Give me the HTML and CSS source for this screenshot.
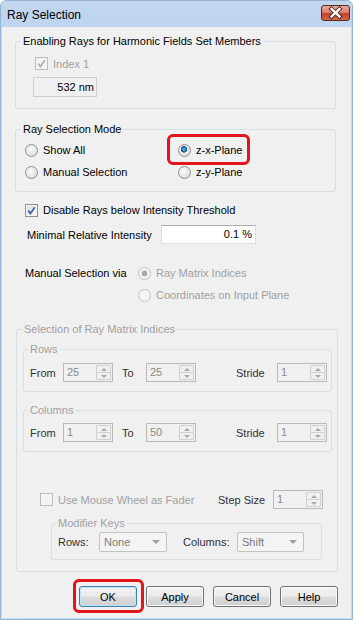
FILE: index.html
```html
<!DOCTYPE html>
<html lang="en">
<head>
    <meta charset="UTF-8">
    <meta name="viewport" content="width=device-width, initial-scale=1.0">
    <title>Ray Selection</title>
    <link rel="stylesheet" href="styles.css">
</head>
<body>
    <div class="window">
        <div class="titlebar">
            <span class="title">Ray Selection</span>
            <span class="close-btn">
                <svg width="29" height="16" viewBox="0 0 29 16">
                    <path d="M10.5 4 L18.5 11.5 M18.5 4 L10.5 11.5" stroke="#4a1812" stroke-width="4.2" stroke-linecap="square"/>
                    <path d="M10.5 4 L18.5 11.5 M18.5 4 L10.5 11.5" stroke="#ffffff" stroke-width="2.4" stroke-linecap="square"/>
                </svg>
            </span>
        </div>

        <div class="client">
            <!-- harmonic fields -->
            <fieldset class="group group-members">
                <legend>Enabling Rays for Harmonic Fields Set Members</legend>
                <div class="check-row index-row disabled">
                    <span class="checkbox checked"></span>
                    <span>Index 1</span>
                </div>
                <div class="textbox readonly wavelength">532 nm</div>
            </fieldset>

            <!-- mode -->
            <fieldset class="group group-mode">
                <legend>Ray Selection Mode</legend>
                <div class="radio-grid">
                    <div class="radio-item"><span class="radio"></span>Show All</div>
                    <div class="radio-item marked"><span class="radio checked"></span>z-x-Plane<span class="red-mark mark-plane"></span></div>
                    <div class="radio-item"><span class="radio"></span>Manual Selection</div>
                    <div class="radio-item"><span class="radio"></span>z-y-Plane</div>
                </div>
            </fieldset>

            <div class="check-row threshold-row">
                <span class="checkbox checked"></span>
                <span>Disable Rays below Intensity Threshold</span>
            </div>

            <div class="field-row intensity-row">
                <span class="intensity-label">Minimal Relative Intensity</span>
                <div class="textbox intensity">0.1 %</div>
            </div>

            <div class="via-block">
                <div class="via-row">
                    <span class="via-label">Manual Selection via</span>
                    <div class="radio-item disabled"><span class="radio checked"></span>Ray Matrix Indices</div>
                </div>
                <div class="via-row via-second">
                    <div class="radio-item disabled"><span class="radio"></span>Coordinates on Input Plane</div>
                </div>
            </div>

            <!-- matrix indices (disabled) -->
            <fieldset class="group group-matrix disabled">
                <legend>Selection of Ray Matrix Indices</legend>

                <fieldset class="group sub-group">
                    <legend>Rows</legend>
                    <div class="spin-row">
                        <span class="lbl lbl-from">From</span>
                        <div class="spin"><span class="spin-value">25</span><span class="spin-buttons"><span class="spin-up"></span><span class="spin-down"></span></span></div>
                        <span class="lbl lbl-to">To</span>
                        <div class="spin"><span class="spin-value">25</span><span class="spin-buttons"><span class="spin-up"></span><span class="spin-down"></span></span></div>
                        <span class="lbl lbl-stride">Stride</span>
                        <div class="spin"><span class="spin-value">1</span><span class="spin-buttons"><span class="spin-up"></span><span class="spin-down"></span></span></div>
                    </div>
                </fieldset>

                <fieldset class="group sub-group group-columns">
                    <legend>Columns</legend>
                    <div class="spin-row">
                        <span class="lbl lbl-from">From</span>
                        <div class="spin"><span class="spin-value">1</span><span class="spin-buttons"><span class="spin-up"></span><span class="spin-down"></span></span></div>
                        <span class="lbl lbl-to">To</span>
                        <div class="spin"><span class="spin-value">50</span><span class="spin-buttons"><span class="spin-up"></span><span class="spin-down"></span></span></div>
                        <span class="lbl lbl-stride">Stride</span>
                        <div class="spin"><span class="spin-value">1</span><span class="spin-buttons"><span class="spin-up"></span><span class="spin-down"></span></span></div>
                    </div>
                </fieldset>

                <div class="wheel-row">
                    <div class="check-row wheel-check">
                        <span class="checkbox"></span>
                        <span>Use Mouse Wheel as Fader</span>
                    </div>
                    <span class="lbl lbl-step">Step Size</span>
                    <div class="spin"><span class="spin-value">1</span><span class="spin-buttons"><span class="spin-up"></span><span class="spin-down"></span></span></div>
                </div>

                <fieldset class="group group-modifier">
                    <legend>Modifier Keys</legend>
                    <div class="combo-row">
                        <span class="lbl lbl-rows">Rows:</span>
                        <div class="combo combo-rows"><span>None</span><span class="combo-arrow"></span></div>
                        <span class="lbl lbl-columns">Columns:</span>
                        <div class="combo combo-columns"><span>Shift</span><span class="combo-arrow"></span></div>
                    </div>
                </fieldset>
            </fieldset>

            <div class="button-row">
                <span class="btn-wrap">
                    <button class="btn default">OK</button>
                    <span class="red-mark mark-ok"></span>
                </span>
                <button class="btn">Apply</button>
                <button class="btn">Cancel</button>
                <button class="btn">Help</button>
            </div>
        </div>
    </div>
</body>
</html>
```

FILE: styles.css
```css
body {
    margin: 0;
    background-color: #ffffff;
    font-family: "Liberation Sans", Arial, sans-serif;
    font-size: 11px;
    color: #000000;
}

.window {
    width: 353px;
    height: 620px;
    box-sizing: border-box;
    border: 1px solid #97b3d4;
    border-radius: 6px 6px 0 0;
    background-color: #c6daf0;
    display: flex;
    flex-direction: column;
}

.titlebar {
    height: 26px;
    flex-shrink: 0;
    display: flex;
    align-items: flex-start;
    justify-content: space-between;
    background: linear-gradient(#c2d7ee, #bed4ed);
    border-radius: 5px 5px 0 0;
}

.title {
    font-size: 12px;
    margin: 7px 0 0 6px;
    line-height: 14px;
}

.close-btn {
    width: 29px;
    height: 16px;
    margin: 4px 2px 0 0;
    box-sizing: border-box;
    border: 1px solid #5a2620;
    border-radius: 3px;
    background: linear-gradient(#e6a99f 0%, #d9826f 45%, #c2402c 55%, #cf6a52 100%);
    display: flex;
}

.close-btn svg {
    margin: -1px;
}

.client {
    flex: 1;
    margin: 0 1px 1px 1px;
    background-color: #f0f0f0;
    padding: 0 0 0 13px;
}

/* group boxes */
.group {
    margin: 0;
    padding: 0;
    border: 1px solid #d5dfe5;
    border-radius: 3px;
    min-width: 0;
}

.group legend {
    padding: 0 2px;
    margin-left: 5px;
    line-height: 13px;
}

.group-members {
    width: 321px;
    box-sizing: border-box;
    margin-top: 8px;
    padding-bottom: 11px;
}

.group-mode {
    width: 321px;
    box-sizing: border-box;
    margin-top: 14px;
    padding-bottom: 8px;
}

.disabled,
.disabled legend {
    color: #a0a0a0;
}

/* checkbox / radio */
.check-row {
    display: flex;
    align-items: center;
    gap: 5px;
}

.checkbox {
    width: 13px;
    height: 13px;
    box-sizing: border-box;
    border: 1px solid #8e8f8f;
    background: linear-gradient(135deg, #dcdcdc, #fbfbfb);
    box-shadow: inset 0 0 0 1px #f4f4f4;
    flex-shrink: 0;
}

.checkbox.checked {
    background-image: url("data:image/svg+xml,%3Csvg xmlns='http://www.w3.org/2000/svg' width='11' height='11'%3E%3Cpath d='M2.2 5.6 L4.4 8.4 L8.8 2.2' fill='none' stroke='%234660a8' stroke-width='1.8'/%3E%3C/svg%3E"), linear-gradient(135deg, #dcdcdc, #fbfbfb);
}

.disabled .checkbox {
    border-color: #bcbcbc;
    background: #f4f4f4;
}

.disabled .checkbox.checked {
    background-image: url("data:image/svg+xml,%3Csvg xmlns='http://www.w3.org/2000/svg' width='11' height='11'%3E%3Cpath d='M2.2 5.6 L4.4 8.4 L8.8 2.2' fill='none' stroke='%23b0b0b0' stroke-width='1.8'/%3E%3C/svg%3E");
}

.index-row {
    height: 15px;
    margin: 8px 0 0 19px;
}

.textbox {
    height: 20px;
    box-sizing: border-box;
    line-height: 18px;
    text-align: right;
    padding-right: 3px;
    border: 1px solid #dbdfe6;
    border-top-color: #abadb3;
    background-color: #ffffff;
}

.textbox.readonly {
    background-color: #f0f0f0;
    border-color: #cfcfcf;
    padding-right: 2px;
}

.wavelength {
    width: 64px;
    margin: 6px 0 0 17px;
}

.radio-grid {
    display: grid;
    grid-template-columns: 153px 1fr;
    grid-auto-rows: 22px;
    margin: 3px 0 0 9px;
}

.radio-item {
    display: flex;
    align-items: center;
    gap: 5px;
    position: relative;
}

.radio {
    width: 13px;
    height: 13px;
    box-sizing: border-box;
    border-radius: 50%;
    border: 1px solid #8e8f8f;
    background: radial-gradient(circle at 40% 40%, #fbfbfb, #d4d4d4);
    flex-shrink: 0;
}

.radio.checked {
    background: radial-gradient(circle at 45% 40%, #8fd4f6 0, #2380c4 1.6px, #0c4d86 3px, transparent 3.4px), radial-gradient(circle at 40% 40%, #fbfbfb, #d4d4d4);
}

.disabled .radio {
    border-color: #c2c2c2;
    background: #f4f4f4;
}

.disabled .radio.checked {
    background: radial-gradient(circle, #a8a8a8 0 2.6px, transparent 3.2px), #f4f4f4;
}

.red-mark {
    position: absolute;
    box-sizing: border-box;
    border: 3px solid #e2151c;
    border-radius: 6px;
}

.mark-plane {
    left: -11px;
    top: -5px;
    width: 83px;
    height: 31px;
}

.threshold-row {
    height: 16px;
    margin: 10px 0 0 10px;
}

.field-row {
    display: flex;
    align-items: center;
}

.intensity-row {
    height: 19px;
    margin: 7px 0 0 12px;
}

.intensity-label {
    width: 134px;
}

.intensity {
    width: 95px;
    height: 19px;
    line-height: 17px;
}

.via-block {
    margin: 18px 0 0 10px;
}

.via-row {
    display: flex;
    align-items: center;
    height: 22px;
}

.via-label {
    width: 113px;
}

.via-second {
    padding-left: 113px;
}

/* matrix indices */
.group-matrix {
    width: 322px;
    box-sizing: border-box;
    margin: 17px 0 0 1px;
    padding-bottom: 11px;
}

.sub-group {
    width: 309px;
    box-sizing: border-box;
    margin: 7px 0 0 6px;
    padding-bottom: 9px;
}

.sub-group legend {
    margin-left: 4px;
}

.group-columns {
    margin-top: 12px;
}

.lbl {
    color: #303030;
}

.spin-row {
    display: flex;
    align-items: center;
    height: 19px;
    margin: 7px 0 0 6px;
}

.group-columns .spin-row {
    margin-top: 6px;
}

.lbl-from {
    width: 33px;
}

.lbl-to {
    width: 24px;
    margin-left: 9px;
}

.lbl-stride {
    width: 41px;
    margin-left: 40px;
}

.spin {
    width: 50px;
    height: 19px;
    box-sizing: border-box;
    border: 1px solid #b9b9b9;
    background-color: #f0f0f0;
    display: flex;
    padding: 1px;
}

.spin-value {
    flex: 1;
    padding-left: 2px;
    line-height: 15px;
    color: #8a8a8a;
}

.spin-buttons {
    width: 15px;
    display: flex;
    flex-direction: column;
    gap: 0;
}

.spin-up,
.spin-down {
    flex: 1;
    border: 1px solid #d0d0d0;
    border-radius: 1px;
    display: flex;
    align-items: center;
    justify-content: center;
}

.spin-down {
    margin-top: -1px;
}

.spin-up::after {
    content: "";
    border-left: 3px solid transparent;
    border-right: 3px solid transparent;
    border-bottom: 3px solid #a8a8a8;
}

.spin-down::after {
    content: "";
    border-left: 3px solid transparent;
    border-right: 3px solid transparent;
    border-top: 3px solid #a8a8a8;
}

.wheel-row {
    display: flex;
    align-items: center;
    height: 19px;
    margin: 38px 0 0 23px;
}

.wheel-check {
    width: 178px;
}

.lbl-step {
    width: 55px;
}

.group-modifier {
    width: 271px;
    box-sizing: border-box;
    margin: 8px 0 0 34px;
    padding-bottom: 7px;
}

.group-modifier legend {
    margin-left: 4px;
}

.combo-row {
    display: flex;
    align-items: center;
    height: 20px;
    margin: 2px 0 0 6px;
}

.lbl-rows {
    width: 41px;
}

.lbl-columns {
    width: 54px;
    margin-left: 16px;
}

.combo {
    height: 20px;
    box-sizing: border-box;
    border: 1px solid #c2c2c2;
    border-radius: 2px;
    background-color: #f4f4f4;
    display: flex;
    align-items: center;
    justify-content: space-between;
    padding: 0 6px 0 4px;
    color: #7a7a7a;
}

.combo-rows {
    width: 68px;
}

.combo-columns {
    width: 67px;
}

.combo-arrow {
    border-left: 4px solid transparent;
    border-right: 4px solid transparent;
    border-top: 4px solid #a0a0a0;
}

/* dialog buttons */
.button-row {
    display: flex;
    gap: 9px;
    margin: 14px 0 0 64px;
}

.btn-wrap {
    position: relative;
    display: flex;
}

.btn {
    width: 58px;
    height: 21px;
    padding: 0;
    font-family: "Liberation Sans", Arial, sans-serif;
    font-size: 11px;
    color: #000000;
    border: 1px solid #707070;
    border-radius: 3px;
    background: linear-gradient(#f2f2f2 0%, #ebebeb 48%, #dddddd 52%, #cfcfcf 100%);
    box-shadow: inset 0 0 0 1px #fbfbfb;
}

.btn.default {
    border-color: #3c7fb1;
    box-shadow: inset 0 0 0 1px #bfe5fa;
    background: linear-gradient(#f2f2f2 0%, #ebebeb 48%, #dddddd 52%, #cfcfcf 100%);
}

.mark-ok {
    left: -6px;
    top: -7px;
    width: 71px;
    height: 34px;
}
```
